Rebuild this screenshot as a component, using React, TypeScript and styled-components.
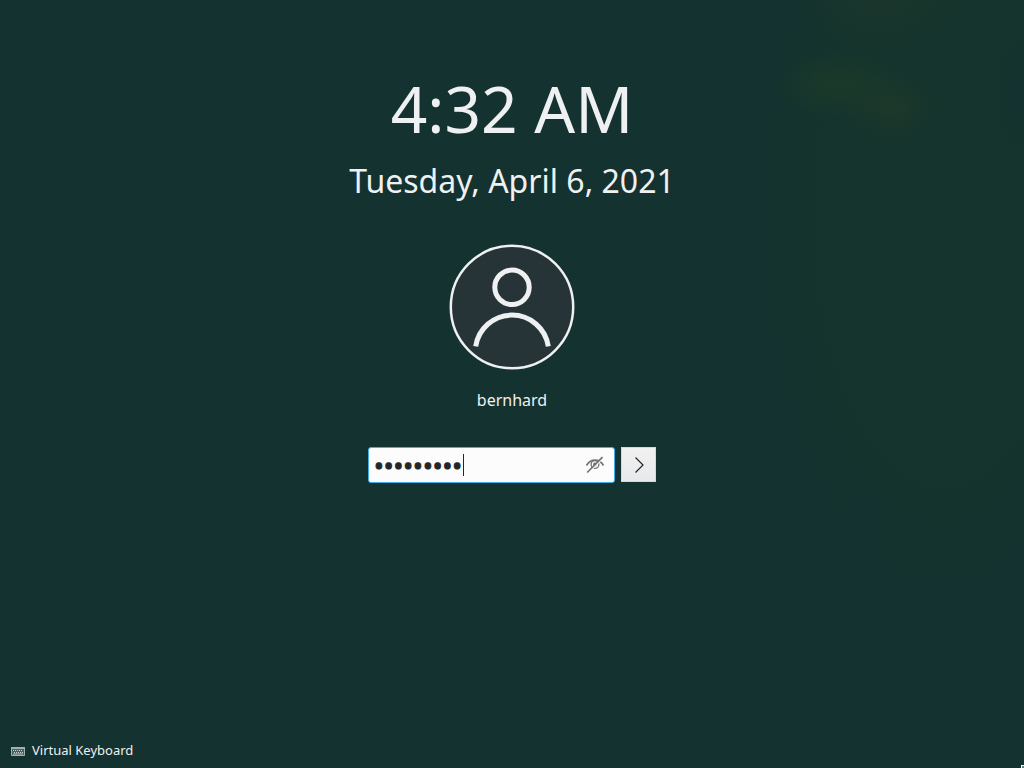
import React, { useState } from "react";
import styled, { createGlobalStyle } from "styled-components";

const GlobalStyle = createGlobalStyle`
  *, *::before, *::after { box-sizing: border-box; }
  body {
    margin: 0;
    background: #133230;
    color: #eff0f1;
    font-family: "Noto Sans", sans-serif;
  }
`;

const Screen = styled.div`
  position: relative;
  min-height: 100vh;
  display: flex;
  flex-direction: column;
  overflow: hidden;
  background:
    radial-gradient(ellipse 70px 34px at 82% 11%, rgba(28, 58, 40, 0.9), transparent),
    radial-gradient(ellipse 50px 34px at 87% 14%, rgba(30, 56, 42, 0.9), transparent),
    radial-gradient(ellipse 90px 50px at 86% 0%, rgba(27, 54, 44, 0.9), transparent),
    radial-gradient(ellipse 30px 60px at 100% 12%, rgba(19, 50, 49, 0.9), transparent),
    radial-gradient(ellipse 46px 60px at 84% 69%, rgba(19, 50, 48, 0.9), transparent),
    radial-gradient(ellipse 20% 56% at 92% 28%, rgba(21, 52, 45, 1) 60%, transparent),
    #133230;
`;

const Main = styled.main`
  flex: 1;
  display: flex;
  flex-direction: column;
  align-items: center;
  padding-top: 65px;
`;

const Clock = styled.header`
  display: flex;
  flex-direction: column;
  align-items: center;
  gap: 6px;
`;

const Time = styled.time`
  font-size: 64px;
  line-height: 88px;
`;

const Day = styled.time`
  font-size: 32px;
  line-height: 44px;
`;

const User = styled.section`
  display: flex;
  flex-direction: column;
  align-items: center;
  gap: 18px;
  margin-top: 41px;
`;

const UserName = styled.h1`
  margin: 0;
  font-size: 16px;
  line-height: 24px;
  font-weight: 400;
`;

const LoginForm = styled.form`
  display: flex;
  gap: 6px;
  margin-top: 35px;
`;

const Field = styled.div`
  position: relative;
  display: flex;
  align-items: center;
  width: 247px;
  height: 36px;
  padding: 0 9px 0 5px;
  border: 1px solid #3daee9;
  border-radius: 3px;
  background: #fcfcfc;
`;

const PasswordInput = styled.input`
  flex: 1;
  min-width: 0;
  height: 32px;
  padding: 0;
  border: 0;
  outline: 0;
  background: transparent;
  color: #232629;
  caret-color: transparent;
  font-family: "Noto Sans", sans-serif;
  font-size: 26px;
  -webkit-text-stroke: 1px #232629;
`;

const Caret = styled.span`
  position: absolute;
  left: 94px;
  top: 6px;
  width: 1px;
  height: 22px;
  background: #232629;
`;

const IconButton = styled.button`
  display: flex;
  padding: 0;
  border: 0;
  background: transparent;
`;

const SubmitButton = styled.button`
  display: flex;
  align-items: center;
  justify-content: center;
  width: 35px;
  height: 35px;
  padding: 0;
  border: 1px solid #d5d8da;
  background: linear-gradient(#f1f1f2, #e8e9ea);
`;

const Footer = styled.footer`
  display: flex;
  padding: 0 10px 8px;
`;

const KeyboardButton = styled.button`
  display: flex;
  align-items: center;
  gap: 6px;
  padding: 0;
  border: 0;
  background: transparent;
  color: #eff0f1;
  font-family: inherit;
  font-size: 13px;
  line-height: 20px;
`;

const Pointer = styled.svg`
  position: absolute;
  right: 0;
  bottom: 0;
`;

const Avatar = () => (
  <svg width="126" height="126" viewBox="0 0 126 126" fill="none" stroke="#eff0f1" aria-hidden="true">
    <circle cx="63" cy="63" r="61.2" fill="#263437" strokeWidth="2.500" />
    <circle cx="63" cy="43.3" r="17.2" strokeWidth="5" />
    <path d="M26.700 102.400A36.700 36.700 0 0 1 99.300 102.400" strokeWidth="5" />
  </svg>
);

const HiddenEye = () => (
  <svg width="20" height="20" viewBox="0 0 20 20" fill="none" stroke="#6f7375" aria-hidden="true">
    <path d="M1.500 10.500C3.500 7 7 5.200 10 5.200s6.500 1.800 8.500 5.300" strokeWidth="1.700" />
    <circle cx="10" cy="9.500" r="3.900" strokeWidth="1.300" />
    <circle cx="10" cy="9.500" r="2" fill="#6f7375" stroke="none" />
    <path d="M3.200 18.200 18.200 3.200" stroke="#fcfcfc" strokeWidth="1.200" />
    <path d="M2.200 17.500 17.500 2.200" strokeWidth="1.700" />
  </svg>
);

const KeyboardIcon = () => (
  <svg width="16" height="16" viewBox="0 0 16 16" aria-hidden="true">
    <path d="M1.500 5.500h13v8h-13z" fill="#47605f" stroke="#a4b0af" />
    <path d="M1 5h14v2H1z" fill="#a4b0af" />
    <path d="M3 8.500h10M4 10.500h9" stroke="#cbd2d2" strokeDasharray="1 1" />
    <path d="M3 12h10" stroke="#b5bfbe" />
  </svg>
);

export default function App() {
  const [password, setPassword] = useState("plasma521");
  const [visible, setVisible] = useState(false);

  return (
    <>
      <GlobalStyle />
      <Screen>
        <Main>
          <Clock>
            <Time dateTime="04:32">4:32 AM</Time>
            <Day dateTime="2021-04-06">Tuesday, April 6, 2021</Day>
          </Clock>
          <User>
            <Avatar />
            <UserName>bernhard</UserName>
          </User>
          <LoginForm onSubmit={(e) => e.preventDefault()}>
            <Field>
              <PasswordInput
                type={visible ? "text" : "password"}
                aria-label="Password"
                value={password}
                onChange={(e) => setPassword(e.target.value)}
              />
              <Caret />
              <IconButton type="button" aria-label="Show password" onClick={() => setVisible(!visible)}>
                <HiddenEye />
              </IconButton>
            </Field>
            <SubmitButton type="submit" aria-label="Log in">
              <svg width="22" height="22" viewBox="0 0 22 22" fill="none" stroke="#232629" strokeWidth="1.200" aria-hidden="true">
                <path d="M7.500 3.500 15 11l-7.500 7.500" />
              </svg>
            </SubmitButton>
          </LoginForm>
        </Main>
        <Footer>
          <KeyboardButton type="button">
            <KeyboardIcon />
            Virtual Keyboard
          </KeyboardButton>
        </Footer>
        <Pointer width="3" height="3" viewBox="0 0 3 3" aria-hidden="true">
          <path d="M0 0h3v1H1v2H0z" fill="#fff" />
          <path d="M1 1h2v2H1z" fill="#777" />
        </Pointer>
      </Screen>
    </>
  );
}
